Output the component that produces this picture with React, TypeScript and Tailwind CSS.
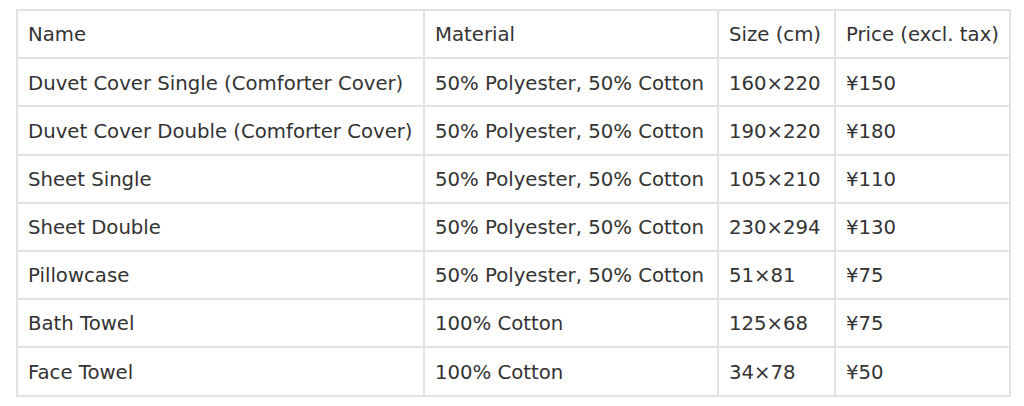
import React from 'react';

const rows = [
  ['Duvet Cover Single (Comforter Cover)', '50% Polyester, 50% Cotton', '160×220', '¥150'],
  ['Duvet Cover Double (Comforter Cover)', '50% Polyester, 50% Cotton', '190×220', '¥180'],
  ['Sheet Single', '50% Polyester, 50% Cotton', '105×210', '¥110'],
  ['Sheet Double', '50% Polyester, 50% Cotton', '230×294', '¥130'],
  ['Pillowcase', '50% Polyester, 50% Cotton', '51×81', '¥75'],
  ['Bath Towel', '100% Cotton', '125×68', '¥75'],
  ['Face Towel', '100% Cotton', '34×78', '¥50'],
];

const cell =
  'border-2 border-[#e2e2e2] pl-[10px] pr-[8px] pt-[2px] h-[48.2px] text-left font-normal whitespace-nowrap';

export default function App() {
  return (
    <div className="bg-white w-[1024px] h-[406px] pt-[9px] pl-[16px] font-['DejaVu_Sans',sans-serif] text-[19.7px] text-[#333]">
      <table className="border-collapse table-fixed w-[995px]">
        <thead>
          <tr>
            <th className={`${cell} w-[407px]`}>Name</th>
            <th className={`${cell} w-[294px]`}>Material</th>
            <th className={`${cell} w-[117px]`}>Size (cm)</th>
            <th className={cell}>Price (excl. tax)</th>
          </tr>
        </thead>
        <tbody>
          {rows.map((r) => (
            <tr key={r[0]}>
              {r.map((c, i) => (
                <td key={i} className={cell}>
                  {c}
                </td>
              ))}
            </tr>
          ))}
        </tbody>
      </table>
    </div>
  );
}
